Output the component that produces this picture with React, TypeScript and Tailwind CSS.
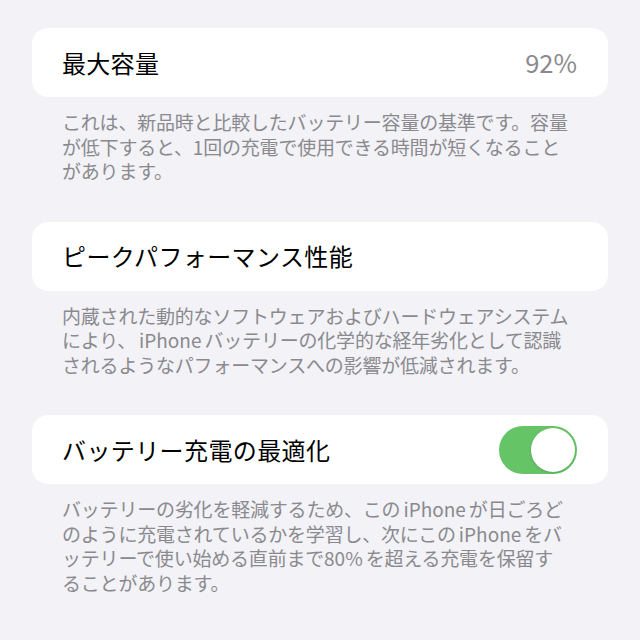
import React from "react";

const font = { fontFamily: '"Noto Sans CJK JP", "Noto Sans", sans-serif' };

function Desc({ lines }: { lines: React.ReactNode[] }) {
  return (
    <div className="mt-[13px] pl-[30px] text-[19px] leading-[24.5px] tracking-[-0.2px] text-[#8a8a8e]">
      {lines.map((l, i) => (
        <div key={i} className="whitespace-nowrap">
          {l}
        </div>
      ))}
    </div>
  );
}

const IP = () => <span className="mx-[3px] tracking-normal">iPhone</span>;

export default function App() {
  return (
    <div
      className="w-[640px] h-[640px] bg-[#f2f2f7] px-[32px] pt-[28px] overflow-hidden"
      style={font}
    >
      <section>
        <div className="h-[69px] bg-white rounded-[16px] flex items-center justify-between pl-[30px] pr-[31px]">
          <span className="text-[24px] tracking-[0.3px] text-black">最大容量</span>
          <span className="text-[25.5px] text-[#8a8a8e]">92%</span>
        </div>
        <Desc
          lines={[
            "これは、新品時と比較したバッテリー容量の基準です。容量",
            "が低下すると、1回の充電で使用できる時間が短くなること",
            "があります。",
          ]}
        />
      </section>

      <section className="mt-[38px]">
        <div className="h-[69px] bg-white rounded-[16px] flex items-center pl-[30px] pr-[31px]">
          <span className="text-[24px] tracking-[0.4px] text-black">ピークパフォーマンス性能</span>
        </div>
        <Desc
          lines={[
            "内蔵された動的なソフトウェアおよびハードウェアシステム",
            <>
              により、
              <IP />
              バッテリーの化学的な経年劣化として認識
            </>,
            "されるようなパフォーマンスへの影響が低減されます。",
          ]}
        />
      </section>

      <section className="mt-[38px]">
        <div className="h-[69px] bg-white rounded-[16px] flex items-center justify-between pl-[30px] pr-[31px]">
          <span className="text-[24px] tracking-[0.4px] text-black">バッテリー充電の最適化</span>
          <div className="w-[78px] h-[48px] rounded-full bg-[#65c466] flex items-center justify-end p-[2px]">
            <div className="w-[44px] h-[44px] rounded-full bg-white shadow-[0_1px_3px_rgba(0,0,0,0.15)]" />
          </div>
        </div>
        <Desc
          lines={[
            <>
              バッテリーの劣化を軽減するため、この
              <IP />
              が日ごろど
            </>,
            <>
              のように充電されているかを学習し、次にこの
              <IP />
              をバ
            </>,
            <>
              ッテリーで使い始める直前まで<span className="mr-[3px] tracking-normal">80%</span>を超える充電を保留す
            </>,
            "ることがあります。",
          ]}
        />
      </section>
    </div>
  );
}
